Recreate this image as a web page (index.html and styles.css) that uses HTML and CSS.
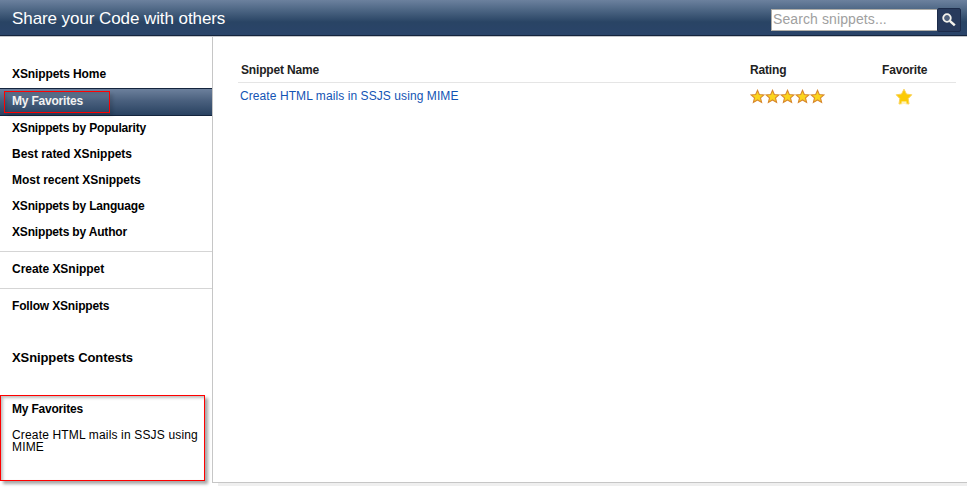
FILE: index.html
```html
<!DOCTYPE html>
<html lang="en">
<head>
<meta charset="utf-8">
<title>XSnippets</title>
<link rel="stylesheet" href="styles.css">
</head>
<body>
<svg class="defs" width="0" height="0" aria-hidden="true">
  <symbol id="star" viewBox="0 0 15 15"><path d="M7.5 1.3 9.3 5.5 14 5.9 10.5 8.9 11.6 13.4 7.5 11 3.4 13.4 4.5 8.9 1 5.9 5.7 5.5Z" fill="#fbd51d" stroke="#d8892f" stroke-width="1.1"/></symbol>
</svg>
<header class="banner">
  <h1 class="title">Share your Code with others</h1>
  <form class="search">
    <input class="search-input" type="text" placeholder="Search snippets...">
    <button class="search-button" type="button" aria-label="Search">
      <svg width="14" height="14" viewBox="0 0 14 14"><circle cx="5" cy="5" r="3.8" fill="#52627d" stroke="#f4f2ec" stroke-width="1.8"/><path d="M7.8 7.8 12.8 12.4" stroke="#f4f2ec" stroke-width="2.5"/></svg>
    </button>
  </form>
</header>
<div class="layout">
  <nav class="sidebar">
    <a class="item home">XSnippets Home</a>
    <a class="item selected"><span class="marker"></span><span class="label">My Favorites</span></a>
    <a class="item tight">XSnippets by Popularity</a>
    <a class="item">Best rated XSnippets</a>
    <a class="item">Most recent XSnippets</a>
    <a class="item tight">XSnippets by Language</a>
    <a class="item tight">XSnippets by Author</a>
    <a class="item ruled first-rule">Create XSnippet</a>
    <a class="item ruled tight">Follow XSnippets</a>
    <a class="item contests">XSnippets Contests</a>
    <section class="favorites">
      <h2 class="fav-title">My Favorites</h2>
      <p class="fav-text">Create HTML mails in SSJS using<br>MIME</p>
    </section>
  </nav>
  <main class="content">
    <div class="row head"><span>Snippet Name</span><span>Rating</span><span>Favorite</span></div>
    <div class="row">
      <a class="link">Create HTML mails in SSJS using MIME</a>
      <span class="stars">
        <svg><use href="#star"/></svg><svg><use href="#star"/></svg><svg><use href="#star"/></svg><svg><use href="#star"/></svg><svg><use href="#star"/></svg>
      </span>
      <span class="favorite"><svg width="18" height="18" viewBox="0 0 18 18"><path d="M9 1.2 11.5 6.1 16.8 6.8 13.2 10.6 14 16 9 15.4 4 16 4.8 10.6 1.2 6.8 6.5 6.1Z" fill="#fbcb05" stroke="#fbd45c" stroke-width="1" stroke-linejoin="round"/><path d="M6.5 13.4h5v2.6h-5z" fill="#fff3bd"/></svg></span>
    </div>
  </main>
</div>
</body>
</html>
```
FILE: styles.css
```css
* { box-sizing: border-box; }
body {
  margin: 0;
  height: 488px;
  overflow: hidden;
  background: #fff;
  font: 12px/14px "Liberation Sans", Arial, sans-serif;
  color: #000;
}
.defs { position: absolute; }
.banner {
  height: 37px;
  display: flex;
  justify-content: space-between;
  padding: 0 6px 0 12px;
  background: linear-gradient(#6c819e 0, #4d6684 10px, #294464 22px, #2a446a 35px);
  border-bottom: 1px solid #c4c6ca;
  box-shadow: inset 0 -1px #14243d;
}
.title { margin: 9px 0 0; font-size: 17px; line-height: 19px; letter-spacing: -.08px; font-weight: 400; color: #fff; }
.search { display: flex; padding-top: 8px; }
.search-input {
  width: 167px;
  height: 22px;
  margin-top: 1px;
  padding: 0 1px 2px;
  border: 1px solid #b0aea8;
  border-radius: 0;
  background: #fff;
  font: 14px "Liberation Sans", Arial, sans-serif;
  letter-spacing: .1px;
}
.search-input::placeholder { color: #a0a0a0; opacity: 1; }
.search-button {
  display: flex;
  align-items: flex-start;
  width: 24px;
  height: 24px;
  margin-left: -1px;
  padding: 4px 0 0 4px;
  border: 1px solid #1c2b4a;
  border-radius: 2px;
  background: #283a5c;
}
.search-button svg { flex: none; }
.layout { display: flex; }
.sidebar { width: 212px; height: 451px; padding-top: 23px; }
.item { display: block; height: 26px; padding: 6px 12px; font-weight: 700; white-space: nowrap; letter-spacing: -.04px; }
.tight { letter-spacing: -.17px; }
.home { height: 28px; padding-top: 7px; letter-spacing: -.1px; }
.selected {
  position: relative;
  height: 28px;
  margin-bottom: -1px;
  padding-top: 5px;
  letter-spacing: -.2px;
  background: linear-gradient(#6c809c, #4a607e 45%, #294261);
  border: solid #14243d;
  border-width: 1px 0;
}
.label { position: relative; color: #f1f1f1; }
.marker {
  position: absolute;
  left: 4px;
  top: 2px;
  width: 106px;
  height: 22px;
  border: 1px solid #f00;
  box-shadow: 3px 3px 3px rgba(0, 0, 0, .12), inset 2px 2px 3px rgba(0, 0, 0, .12);
}
.ruled { height: 37px; padding-top: 10px; border-top: 1px solid #d5d5d5; }
.first-rule { margin-top: 6px; }
.contests { margin-top: 19px; padding-top: 7px; font-size: 13px; letter-spacing: -.1px; }
.favorites {
  width: 205px;
  height: 86px;
  margin-top: 25px;
  padding: 6px 4px 0 11px;
  border: 1px solid #f00;
  box-shadow: 3px 3px 3px rgba(0, 0, 0, .35), inset 2px 2px 3px rgba(0, 0, 0, .25);
}
.fav-title { margin: 0 0 13px; font-size: 12px; line-height: 14px; letter-spacing: -.2px; }
.fav-text { margin: 0; line-height: 12px; white-space: nowrap; letter-spacing: .16px; }
.content {
  width: 755px;
  height: 446px;
  padding: 22px 11px 0 25px;
  border: solid #c6c6c6;
  border-width: 0 0 1px 1px;
  box-shadow: 6px 3px 0 #efefef;
}
.row { display: grid; grid-template-columns: 512px 132px 1fr; height: 26px; padding: 6px 0 0 2px; }
.head { height: 24px; padding: 4px 0 0 3px; grid-template-columns: 509px 132px 1fr; border-bottom: 1px solid #e5e5e5; font-weight: 700; color: #222; letter-spacing: -.17px; }
.link { color: #1354b4; letter-spacing: .08px; }
.stars { display: flex; margin-left: -2px; }
.stars svg { width: 15px; height: 15px; }
.favorite { margin: -1px 0 0 11px; }
```
